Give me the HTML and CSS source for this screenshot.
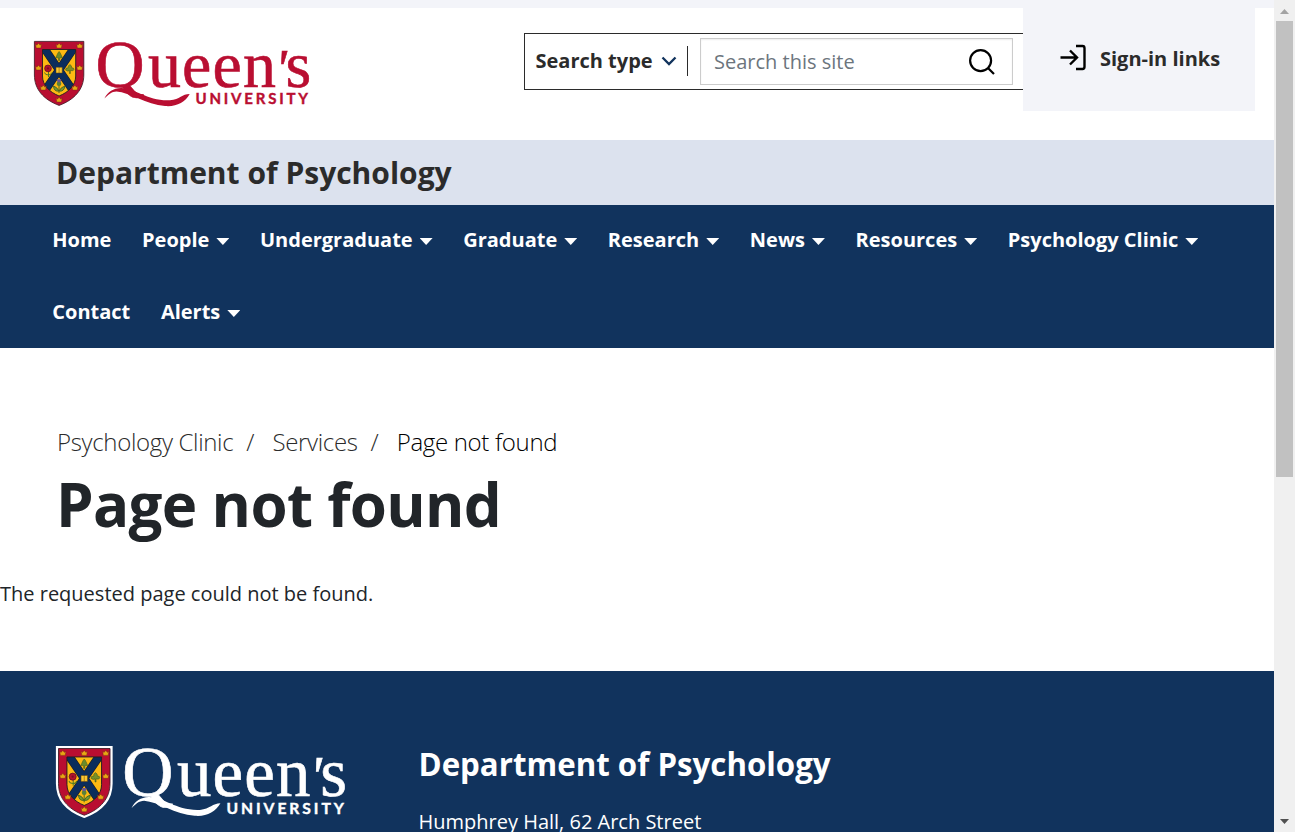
FILE: index.html
```
<!DOCTYPE html>
<html lang="en">
<head>
<meta charset="utf-8">
<title>Page not found | Department of Psychology</title>
<link rel="stylesheet" href="styles.css">
</head>
<body>
<svg class="defs" aria-hidden="true">
  <defs>
    <path id="crown" d="M-3-2.2-1.7-.8 0-2.8 1.7-.8 3-2.2 2.3 2H-2.3Z" fill="#e7a614" stroke="#6d2415" stroke-width=".4"/>
    <g id="shield">
      <path d="M34.4 41.4H83.8V75C83.8 89 75 99.500 59.100 105.400 43.200 99.500 34.400 89 34.400 75Z" fill="#b90e31" stroke="#3a1420" stroke-width=".8"/>
      <clipPath id="field"><path d="M42.500 49.500H75.700V76C75.700 85 69 92 59.100 96 49.200 92 42.500 85 42.500 76Z"/></clipPath>
      <g clip-path="url(#field)">
        <path d="M42 49H76V97H42Z" fill="#fdb913"/>
        <path d="M42 45 76 95M76 45 42 95" stroke="#231f20" stroke-width="8.200"/>
        <path d="M42 45 76 95M76 45 42 95" stroke="#0b2d5c" stroke-width="7"/>
      </g>
      <path d="M42.500 49.500H75.700V76C75.700 85 69 92 59.100 96 49.200 92 42.500 85 42.500 76Z" fill="none" stroke="#231f20" stroke-width=".9"/>
      <path d="M56 67.300H58.800L59.100 67.800 59.400 67.300H62.200V73H56ZM59.100 68V73" fill="#fdc832" stroke="#63440b" stroke-width=".5"/>
      <path d="M59.100 51.500C57.500 53 57.200 55 55.700 57.800H58.500V60.500H59.700V57.800H62.500C61 55 60.700 53 59.100 51.500Z" fill="#6a8b2b" stroke="#3b551c" stroke-width=".5"/>
      <path d="M69.800 64.500Q67.500 66 68.200 67.800 65.500 67.500 65.500 70 68 72 69.400 70.500V73.500H70.400V70.500Q73.500 71.500 74 69.500 74 67.500 71.700 67.800 72 65.500 69.800 64.500Z" fill="#789027" stroke="#3b551c" stroke-width=".5"/>
      <path d="M48.500 70V77M48.500 75Q45 75 44.500 72.500M48.500 75Q51 75 52 72.500" fill="none" stroke="#4e7b25" stroke-width="1"/>
      <circle cx="48" cy="68.400" r="3.400" fill="#b3122d" stroke="#641020" stroke-width=".7"/>
      <circle cx="48" cy="68.400" r="1.100" fill="#7c1022"/>
      <path d="M59 84V93M59 91Q54 92 53.500 86 57 87 59 91ZM59 91Q64 92 65 86 61 87 59 91Z" fill="#769733" stroke="#426523" stroke-width=".9"/>
      <circle cx="59" cy="83.800" r="2.300" fill="#58813b"/>
      <path d="M56.700 79.300H61.300L60.500 82.200H57.500Z" fill="#6d568d"/>
      <use href="#crown" x="38.500" y="46"/><use href="#crown" x="59.100" y="46"/><use href="#crown" x="79.700" y="46"/>
      <use href="#crown" x="38.500" y="68"/><use href="#crown" x="79.700" y="68"/>
      <use href="#crown" x="43.300" y="88"/><use href="#crown" x="74.900" y="88"/><use href="#crown" x="59.100" y="100"/>
    </g>
    <path id="swash" d="M104.400 98.600C108 91.500 113 88.500 121 88C134 87.500 148 101.500 170 100.300C180 99.500 182 94 189.700 94C185 102.500 176 107 165 106C146 104.500 130 92.500 116.500 91.500C111.500 91.500 108 95 104.400 98.600Z"/>
  </defs>
</svg>

<div class="viewport">
  <div class="page">
    <div class="strip"></div>
    <header class="header">
      <svg class="logo" viewBox="32 39 280 70" role="img" aria-label="Queen's University">
        <use href="#shield"/>
        <use href="#swash"/>
        <text class="logo-name" x="95.500 148 182 212.500 243 275 285.500" y="87"><tspan class="logo-q">Q</tspan>ueen<tspan class="logo-tick">'</tspan>s</text>
        <text class="logo-sub" x="195.500" y="104" textLength="112.500">UNIVERSITY</text>
      </svg>
      <form class="search">
        <div class="search-type"><span class="st-label">Search type</span>
          <svg width="16" height="10" viewBox="0 0 16 10"><path d="M1.500 1.500 8 8 14.500 1.500" fill="none" stroke="#11335d" stroke-width="2.300"/></svg>
        </div>
        <div class="search-field"><span class="sf-label">Search this site</span>
          <svg width="28" height="28" viewBox="0 0 28 28" fill="none" stroke="#000" stroke-width="2.200"><circle cx="12.600" cy="12.600" r="10.500"/><path d="M20 20 26 26"/></svg>
        </div>
      </form>
      <div class="signin">
        <svg width="28" height="28" viewBox="0 0 28 28" fill="none" stroke="#000" stroke-width="2.400"><path d="M1.500 13.500H18M11 6.500 18 13.500 11 20.500M17 2H23.500Q25.500 2 25.500 4.200V22.800Q25.500 25 23.500 25H17"/></svg>
        <span class="si-label">Sign-in links</span>
      </div>
    </header>
    <div class="dept"><span class="dept-name">Department of Psychology</span></div>
    <nav class="nav">
      <div class="nav-row">
        <a>Home</a><a class="drop">People</a><a class="drop">Undergraduate</a><a class="drop">Graduate</a><a class="drop">Research</a><a class="drop">News</a><a class="drop">Resources</a><a class="drop">Psychology Clinic</a>
      </div>
      <div class="nav-row"><a>Contact</a><a class="drop">Alerts</a></div>
    </nav>
    <main class="main">
      <div class="crumbs"><a>Psychology Clinic</a><i>/</i><a>Services</a><i>/</i><span>Page not found</span></div>
      <h1 class="title"><span>Page not found</span></h1>
      <p class="message"><span>The requested page could not be found.</span></p>
    </main>
    <footer class="footer">
      <svg class="logo logo-light" viewBox="32 39 280 70" role="img" aria-label="Queen's University">
        <path class="shield-edge" d="M34.400 41.400H83.800V75C83.800 89 75 99.500 59.100 105.400 43.200 99.500 34.400 89 34.400 75Z"/>
        <use href="#shield"/>
        <use href="#swash"/>
        <text class="logo-name" x="95.500 148 182 212.500 243 275 285.500" y="87"><tspan class="logo-q">Q</tspan>ueen<tspan class="logo-tick">'</tspan>s</text>
        <text class="logo-sub" x="195.500" y="104" textLength="112.500">UNIVERSITY</text>
      </svg>
      <div class="address">
        <h2><span>Department of Psychology</span></h2>
        <p><span>Humphrey Hall, 62 Arch Street</span></p>
      </div>
    </footer>
  </div>
  <div class="scrollbar">
    <svg width="9" height="5" viewBox="0 0 9 5"><path d="M0 5 4.500 0 9 5Z" fill="#a3a3a3"/></svg>
    <div class="thumb"></div>
    <svg class="down" width="9" height="5" viewBox="0 0 9 5"><path d="M0 0H9L4.500 5Z" fill="#505050"/></svg>
  </div>
</div>
</body>
</html>
```
FILE: styles.css
```
* { box-sizing: border-box; }
body { margin: 0; font-family: "Open Sans", sans-serif; font-size: 19px; color: #212529; background: #fff; overflow: hidden; }
h1, h2, p { margin: 0; }
svg { display: block; flex: none; }
.defs { position: absolute; width: 0; height: 0; }
.viewport { display: flex; height: 832px; overflow: hidden; }
.page { width: 1274px; height: 832px; overflow: hidden; flex: none; white-space: nowrap; }
.strip { height: 8px; background: #f3f4f9; }
.header { height: 132px; display: flex; align-items: flex-start; padding-left: 32px; }
.logo { width: 280px; height: 70px; margin-top: 31px; fill: #b90e31; stroke: none; overflow: visible; }
.logo-name { font-family: "Liberation Serif", serif; font-size: 66px; stroke: #b90e31; stroke-width: .6; }
.logo-q { font-size: 68px; }
.logo-tick { font-size: 54px; font-style: italic; }
.logo-sub { font-family: Lato, sans-serif; font-weight: 700; font-size: 15px; stroke: #b90e31; stroke-width: .4; }
.logo-light .logo-name, .logo-light .logo-sub { stroke: #fff; }
.search { width: 499px; height: 57px; margin: 25px 0 0 212px; border: 1px solid #2b2b2b; border-right: 0; display: flex; align-items: center; }
.search-type { width: 163px; height: 30px; margin-bottom: 2px; padding-left: 10.500px; border-right: 1px solid #2b2b2b; display: flex; align-items: center; font-weight: 700; font-size: 20px; color: #2b2b2b; }
.st-label { width: 125.500px; }
.search-field { width: 313px; height: 47px; margin-left: 12px; padding: 0 16px 0 13px; border: 1px solid #ccc; box-shadow: inset 0 1px 2px #eee; display: flex; align-items: center; justify-content: space-between; color: #6c757d; font-size: 20px; }
.signin { width: 232px; height: 103px; background: #f3f4f9; padding: 0 0 3px 36px; display: flex; align-items: center; gap: 13px; font-weight: 700; font-size: 20px; color: #2b2b2b; }
.dept { height: 65px; background: #dce2ee; padding-left: 56px; line-height: 66px; font-size: 30px; font-weight: 700; color: #2b2b2b; }
.nav { height: 143px; background: #11335d; color: #fff; padding-left: 52.300px; font-size: 20px; font-weight: 700; }
.nav-row { height: 72px; display: flex; gap: 30.600px; line-height: 70px; }
.drop { display: flex; height: 70px; align-items: center; gap: 7px; }
.drop::after { content: ""; width: 13px; height: 7px; background: #fff; clip-path: polygon(0 0, 100% 0, 50% 100%); margin-top: 3px; }
.main { height: 323px; }
.crumbs { display: flex; padding: 77px 0 0 57px; line-height: 34px; font-size: 24px; letter-spacing: -.33px; font-weight: 300; color: #2b2b2b; }
.crumbs i { font-style: normal; padding: 0 18.300px 0 13px; }
.crumbs span { color: #000; }
.title { padding-left: 56px; line-height: 72px; font-size: 60px; letter-spacing: -.65px; font-weight: 700; margin-top: 9px; }
.message { line-height: 30px; margin-top: 39px; font-size: 20px; }
.footer { height: 161px; background: #11335d; color: #fff; display: flex; padding-left: 56px; }
.footer .logo { width: 292px; height: 73px; margin-top: 75px; fill: #fff; }
.footer .shield-edge { fill: #fff; stroke: #fff; stroke-width: 5; }
.address { padding: 71px 0 0 70.500px; }
.address h2 { font-size: 31.250px; font-weight: 700; line-height: 44px; }
.address p { font-size: 20px; line-height: 30px; margin-top: 21px; }
.scrollbar { width: 21px; height: 832px; background: #f0f0f0; display: flex; flex-direction: column; align-items: center; padding: 9px 0 8px; }
.thumb { width: 17px; height: 456px; background: #c1c1c1; margin-top: 7px; }
.down { margin-top: auto; }
```
